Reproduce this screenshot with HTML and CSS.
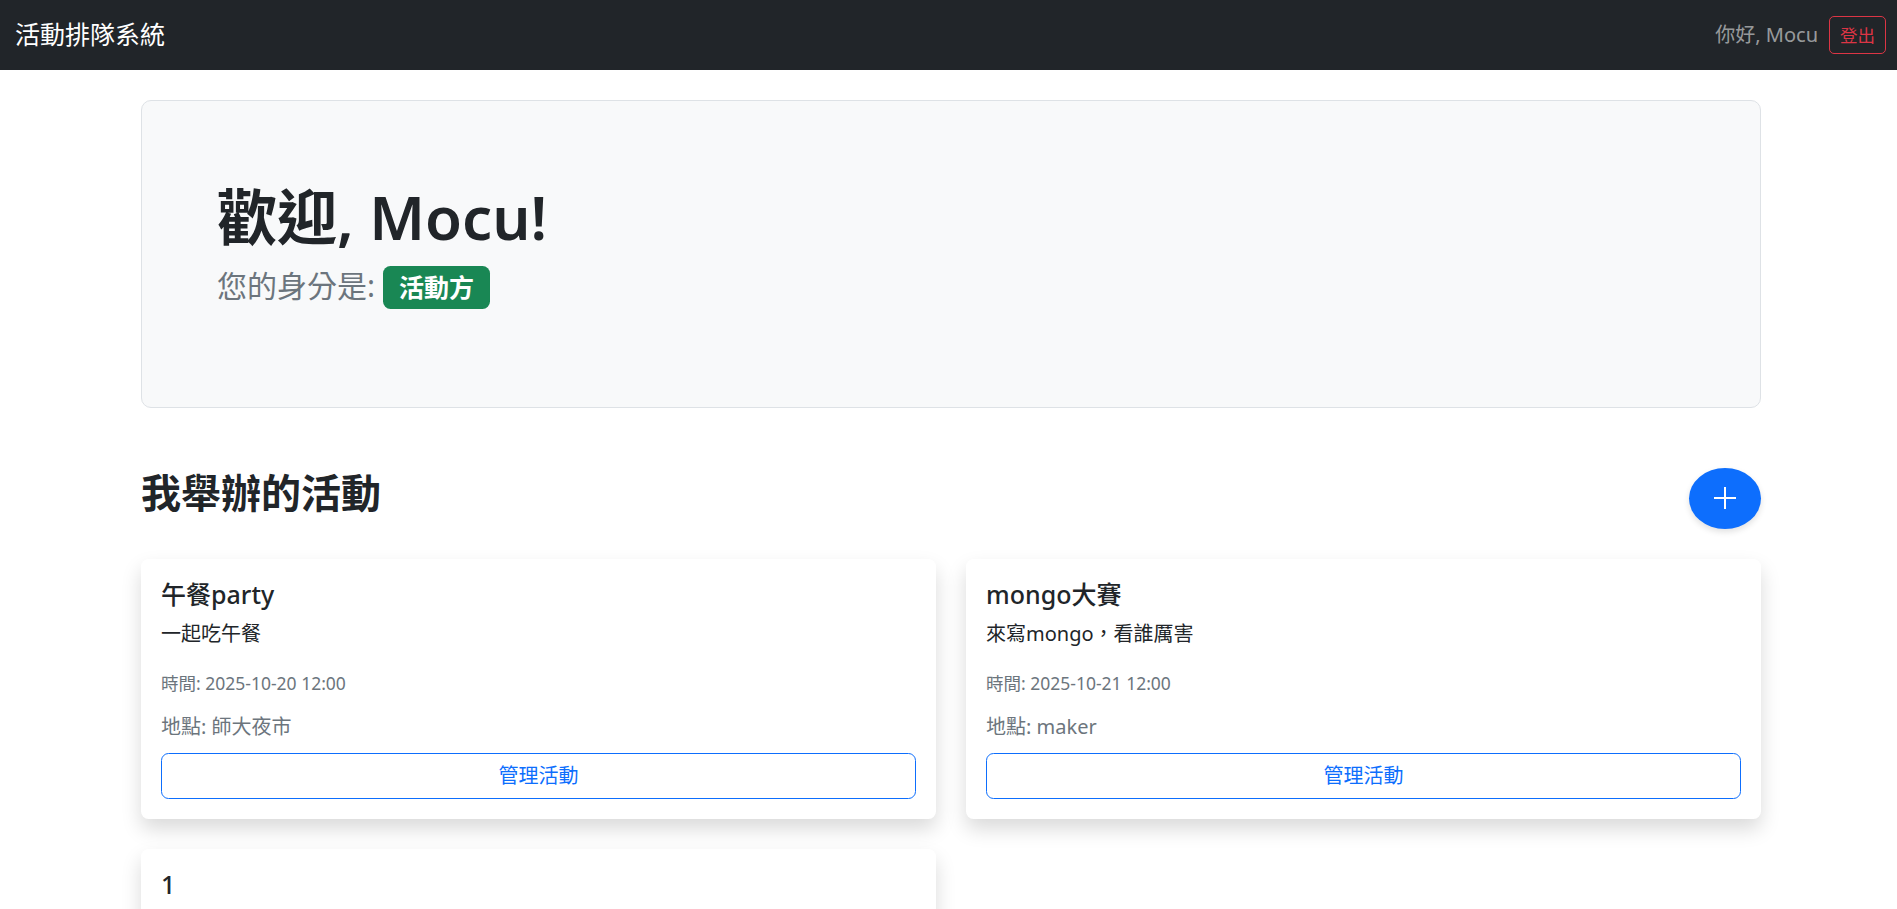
FILE: index.html
```html
<!DOCTYPE html>
<html lang="zh-Hant">
<head>
<meta charset="utf-8">
<title>活動排隊系統</title>
<link rel="stylesheet" href="styles.css">
</head>
<body>
<nav class="navbar">
  <span class="brand">活動排隊系統</span>
  <div class="nav-right">
    <span class="greeting">你好, Mocu</span>
    <button class="btn-logout">登出</button>
  </div>
</nav>
<main class="page">
  <div class="container">
    <section class="hero">
      <h1 class="hero-title">歡迎, Mocu!</h1>
      <p class="hero-sub">您的身分是: <span class="badge">活動方</span></p>
    </section>

    <div class="section-head">
      <h2 class="section-title">我舉辦的活動</h2>
      <button class="btn-add" aria-label="新增活動">
        <svg width="22" height="22" viewBox="0 0 22 22" aria-hidden="true">
          <line x1="11" y1="0" x2="11" y2="22" stroke="#fff" stroke-width="2"/>
          <line x1="0" y1="11" x2="22" y2="11" stroke="#fff" stroke-width="2"/>
        </svg>
      </button>
    </div>

    <div class="grid">
      <div class="card">
        <h5 class="card-title">午餐party</h5>
        <p class="card-desc">一起吃午餐</p>
        <p class="card-time">時間: 2025-10-20 12:00</p>
        <p class="card-place">地點: 師大夜市</p>
        <button class="btn-manage">管理活動</button>
      </div>
      <div class="card">
        <h5 class="card-title">mongo大賽</h5>
        <p class="card-desc">來寫mongo，看誰厲害</p>
        <p class="card-time">時間: 2025-10-21 12:00</p>
        <p class="card-place">地點: maker</p>
        <button class="btn-manage">管理活動</button>
      </div>
      <div class="card">
        <h5 class="card-title">1</h5>
        <p class="card-desc">1</p>
        <p class="card-time">時間: 2025-10-22 12:00</p>
        <p class="card-place">地點: 1</p>
        <button class="btn-manage">管理活動</button>
      </div>
    </div>
  </div>
</main>
</body>
</html>
```
FILE: styles.css
```css
html {
  font-size: 20px;
  scrollbar-width: none;
}
html::-webkit-scrollbar {
  display: none;
}
body {
  margin: 0;
  font-family: "Noto Sans", "Noto Sans CJK TC", sans-serif;
  font-size: 20px;
  line-height: 1.5;
  color: #212529;
  background: #fff;
}

/* navbar */
.navbar {
  height: 70px;
  box-sizing: border-box;
  background: #212529;
  display: flex;
  align-items: center;
  justify-content: space-between;
  padding: 0 11px 0 15px;
}
.brand {
  color: #fff;
  font-size: 25px;
  line-height: 37.5px;
}
.nav-right {
  display: flex;
  align-items: center;
  gap: 11px;
}
.greeting {
  color: rgba(255, 255, 255, 0.55);
  font-size: 20px;
}
.btn-logout {
  font-family: inherit;
  font-size: 17.5px;
  line-height: 26px;
  padding: 5px 10px;
  color: #dc3545;
  background: transparent;
  border: 1px solid #dc3545;
  border-radius: 5px;
}

/* page */
.page {
  padding: 30px 0 0 5px;
}
.container {
  max-width: 1620px;
  margin: 0 auto;
  padding: 0 15px;
}

.hero {
  background: #f8f9fa;
  border: 1px solid #dee2e6;
  border-radius: 10px;
  padding: 80px 75px 78px;
  margin-bottom: 60px;
}
.hero-title {
  font-size: 60px;
  font-weight: 600;
  line-height: 1.2;
  margin: 0 0 10px;
}
.hero-sub {
  font-size: 30px;
  line-height: 45px;
  color: #6c757d;
  margin: 0 0 20px;
}
.badge {
  display: inline-block;
  font-size: 25px;
  font-weight: 700;
  line-height: 1;
  padding: 8.75px 16.25px;
  background: #198754;
  color: #fff;
  border-radius: 7.5px;
}

.section-head {
  display: flex;
  justify-content: space-between;
  align-items: center;
  margin-bottom: 30px;
}
.section-title {
  font-size: 40px;
  font-weight: 700;
  line-height: 1.2;
  margin: 0 0 10px;
}
.btn-add {
  width: 72px;
  height: 61px;
  padding: 0;
  border: 0;
  border-radius: 50%;
  background: #0d6efd;
  box-shadow: 0 3px 6px rgba(0, 0, 0, 0.12);
  display: flex;
  align-items: center;
  justify-content: center;
}

.grid {
  display: grid;
  grid-template-columns: 1fr 1fr;
  gap: 30px;
}
.card {
  background: #fff;
  border-radius: 7.5px;
  box-shadow: 0 10px 20px rgba(0, 0, 0, 0.15);
  padding: 20px;
}
.card-title {
  font-size: 25px;
  font-weight: 500;
  line-height: 1.2;
  margin: 0 0 10px;
}
.card-desc {
  margin: 0 0 19px;
}
.card-time {
  font-size: 17.5px;
  line-height: 30px;
  color: #6c757d;
  margin: 0 0 14px;
}
.card-place {
  line-height: 30px;
  color: #6c757d;
  margin: 0 0 11px;
}
.btn-manage {
  display: block;
  width: 100%;
  font-family: inherit;
  font-size: 20px;
  line-height: 30px;
  padding: 7px 14px;
  color: #0d6efd;
  background: #fff;
  border: 1px solid #0d6efd;
  border-radius: 7.5px;
  text-align: center;
}
```
